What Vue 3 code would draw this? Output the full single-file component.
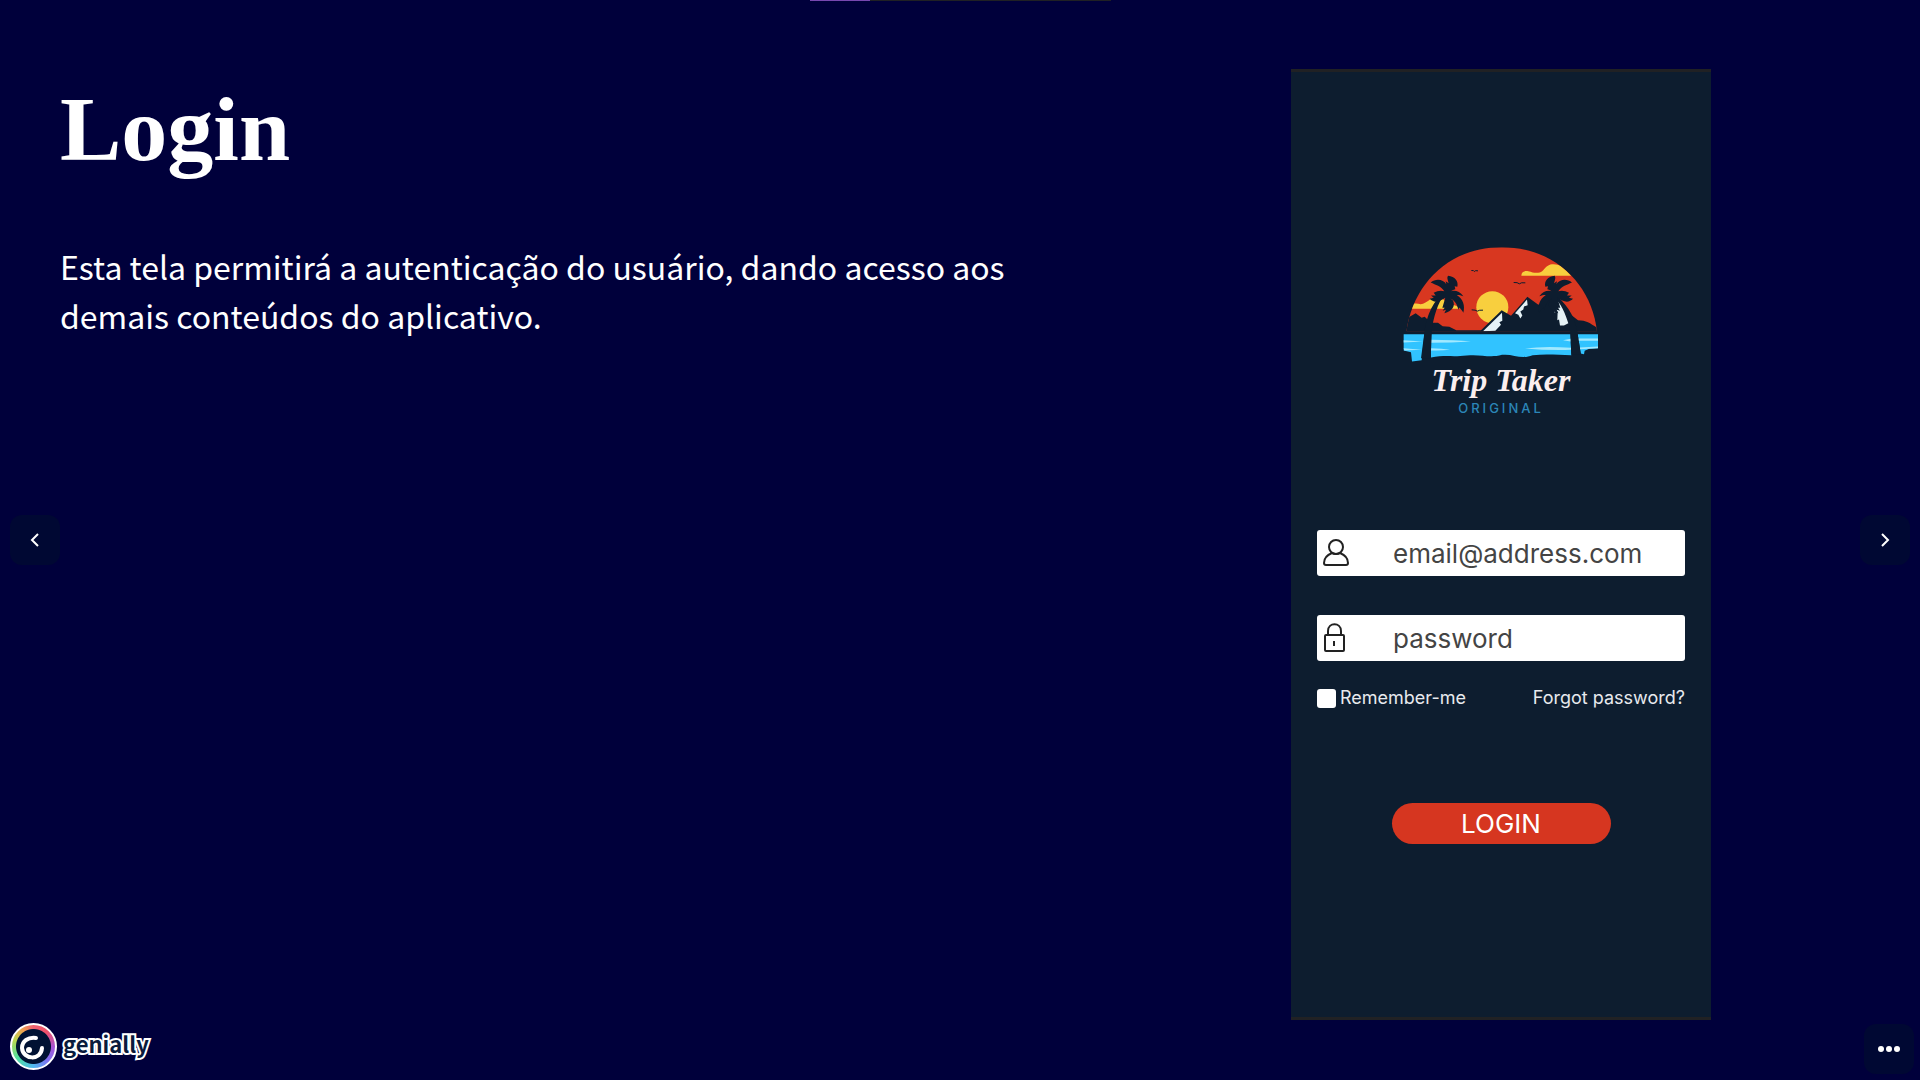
<script setup>
import { ref } from 'vue'

const email = ref('email@address.com')
const password = ref('password')
const remember = ref(false)
const progress = ref(20)
</script>

<template>
  <div class="viewer">
    <header class="top">
      <div class="progress"><div class="progress-fill" :style="{ width: progress + '%' }"></div></div>
    </header>

    <main class="stage">
      <button class="control" type="button" aria-label="Previous">
        <svg width="50" height="50" viewBox="0 0 50 50"><path d="m28 19-6 6 6 6" /></svg>
      </button>

      <section class="slide">
        <div class="copy">
          <h1>Login</h1>
          <p>Esta tela permitirá a autenticação do usuário, dando acesso aos demais conteúdos do aplicativo.</p>
        </div>

        <form class="phone" @submit.prevent>
          <div class="brand">
            <svg class="art" viewBox="60 48 600 350" aria-hidden="true">
              <defs>
                <clipPath id="sky"><path d="M76 304C96 160 205 51 362 51S632 160 648 304Z" /></clipPath>
                <g id="palm">
                  <path d="M199 188C214 178 234 180 247 198C237 195 232 194 228 195C246 206 253 226 247 248C243 240 239 236 235 232L232 239C229 222 219 209 208 205L216 211C223 227 216 242 190 249L195 239L185 242L191 233L184 233C188 222 190 211 193 203C175 216 158 219 146 206L158 203L150 196L164 196L158 188C169 181 181 180 190 183C180 168 164 164 149 157C164 144 187 147 196 162L194 153L203 159C200 149 197 142 201 137C222 139 233 153 229 170L221 168L223 177C217 179 209 183 199 188Z" />
                </g>
              </defs>
              <g clip-path="url(#sky)">
                <path fill="#d83720" d="M60 40h610v264H60z" />
                <path fill="#f8cf3e" d="M421 137C421 125 431 120 442 123C455 126 462 130 476 127C488 125 490 109 508 103C537 99 549 114 570 137Z" />
                <path fill="#f8cf3e" d="M82 236C86 220 101 218 119 222C140 219 145 203 164 201C190 202 194 218 211 224C224 225 232 229 235 236Z" />
                <circle cx="334" cy="231" r="48" fill="#f8cf3e" />
                <path d="M60 304V274L86 260 104 249 122 263 131 260 150 278 171 278 185 288 205 290 226 300H300L362 240 390 257 439 200 472 224 520 191 568 252 591 270C620 270 630 282 660 300V304Z" />
                <path fill="#e5f2f6" d="M306 303 363 248 364 272 355 276 360 284 343 302Z" />
                <path fill="#e5f2f6" d="M402 249 438 208 440 225 429 229 427 238 418 244 424 256 418 265 412 254Z" />
              </g>
              <path fill="#31c3ff" d="M68 312H130L122 390 93 394 90 366 68 361ZM149 312H568L571 375C534 375 500 371 455 375C420 389 396 370 363 374C324 385 300 371 257 376C216 381 190 374 150 382ZM590 312H651V354L625 356 611 362 609 372 599 370Z" />
              <g fill="#a2e9ff">
                <path d="M68 330 126 334 68 337ZM150 329Q220 329 270 334Q210 338 150 338ZM68 354 123 359 70 361ZM150 354Q184 354 207 359Q182 362 150 361ZM432 355Q490 347 570 353V359Q500 361 432 355ZM546 330Q580 325 569 325V334ZM592 325H651V332H592ZM597 352 651 349V354L597 357Z" />
              </g>
              <path d="M197 188C177 204 162 242 153 294L149 384H120L132 294C141 246 163 200 197 188ZM521 190C551 218 580 252 588 299L600 374H571L568 304C559 258 544 224 513 203Z" />
              <path fill="#e5f2f6" d="M513 203C532 209 546 230 562 279L549 286H537L534 268L529 270L530 244L520 247L523 230Z" />
              <use href="#palm" />
              <use href="#palm" transform="matrix(-1 0 0 1 722 0)" />
              <path fill="none" stroke="#0d1d2f" stroke-width="3" d="M271 121Q279 120 280 124Q282 120 291 122M398 157Q410 156 415 161Q420 156 433 158M272 239Q284 239 289 243Q294 239 306 240" />
            </svg>
            <strong>Trip Taker</strong>
            <small>ORIGINAL</small>
          </div>

          <label class="field">
            <svg viewBox="0 0 27 28" aria-hidden="true"><circle cx="13" cy="8" r="7" /><path d="M9 14C4 16 1 20 1 24Q1 26 3 26H23Q25 26 25 24C25 20 22 16 17 14Q13 16 9 14Z" /></svg>
            <input v-model="email" type="text" aria-label="Email" />
          </label>
          <label class="field">
            <svg viewBox="0 0 27 28" aria-hidden="true"><rect x="2" y="11" width="19" height="16" rx="1" /><path d="M5 11V7C5-2 18-2 18 7V11M11 17v5" /></svg>
            <input v-model="password" type="text" aria-label="Password" />
          </label>

          <div class="options">
            <label class="remember"><input v-model="remember" type="checkbox" />Remember-me</label>
            <a href="#">Forgot password?</a>
          </div>

          <button class="submit" type="submit">LOGIN</button>
        </form>
      </section>

      <button class="control" type="button" aria-label="Next">
        <svg width="50" height="50" viewBox="0 0 50 50"><path d="m22 19 6 6-6 6" /></svg>
      </button>
    </main>

    <footer class="bottom">
      <a class="genially" href="#">
        <span class="ring"><svg viewBox="2 2 43 43" aria-hidden="true"><path d="M26 15C18 14 12 18 12 25C13 37 31 38 32 25" /><circle cx="19" cy="27" r="3" /></svg></span>
        <span class="wordmark">genially</span>
      </a>
      <button class="control" type="button" aria-label="More options">
        <svg class="dots" width="50" height="50" viewBox="0 0 50 50"><circle cx="17" cy="25" r="3" /><circle cx="25" cy="25" r="3" /><circle cx="33" cy="25" r="3" /></svg>
      </button>
    </footer>
  </div>
</template>

<style>
body {
  margin: 0;
  background: #00003b;
}
</style>

<style scoped>
* {
  box-sizing: border-box;
}
.viewer {
  min-height: 100vh;
  display: grid;
  grid-template-rows: 60px 1fr 60px;
  background: #00003b;
  color: #fff;
  font-family: Inter, "Liberation Sans", sans-serif;
}
.progress {
  width: 301px;
  height: 1px;
  margin: 0 auto;
  background: #202124;
}
.progress-fill {
  height: 100%;
  background: #7848b0;
}
.stage {
  display: grid;
  grid-template-columns: 50px 1fr 50px;
  align-items: center;
  padding: 0 10px;
}
.control {
  width: 50px;
  height: 50px;
  padding: 0;
  border: 0;
  border-radius: 12px;
  background: #000833;
}
.control svg {
  display: block;
  fill: none;
  stroke: #fff;
  stroke-width: 2;
}
.control .dots {
  fill: #fff;
  stroke: none;
}
.slide {
  align-self: stretch;
  display: flex;
  justify-content: space-between;
  padding: 9px 149px 0 0;
}
.copy {
  flex: 0 1 940px;
}
h1 {
  margin: 10px 0 0;
  font: bold 92px/100px "Liberation Serif", serif;
}
p {
  margin: 63px 0 0;
  font: 32px/49px "Noto Sans CJK JP", "Noto Sans", sans-serif;
}
.copy {
  flex-basis: 960px;
}
.phone {
  flex: 0 0 420px;
  min-width: 0;
  display: flex;
  flex-direction: column;
  align-items: center;
  align-self: flex-start;
  min-height: 951px;
  padding: 174px 26px 40px;
  border: solid #202124;
  border-width: 3px 0;
  background: #0d1d2f;
}
.brand {
  display: flex;
  flex-direction: column;
  align-items: center;
  height: 284px;
}
.art {
  width: 200px;
  height: 117px;
  fill: #0d1d2f;
}
.brand strong {
  font: italic bold 32px/34px "Liberation Serif", serif;
  color: #fbefef;
}
.brand small {
  margin-top: 3px;
  font: 500 13px/16px Inter, sans-serif;
  letter-spacing: 3px;
  color: #2b86b8;
}
.field {
  display: flex;
  align-items: center;
  width: 100%;
  height: 46px;
  margin-bottom: 39px;
  padding-left: 6px;
  border-radius: 3px;
  background: #fff;
}
.field svg {
  width: 27px;
  height: 30px;
  flex: none;
  fill: none;
  stroke: #222;
  stroke-width: 2;
}
.field input {
  flex: 1;
  width: 0;
  min-width: 0;
  height: 46px;
  padding: 1px 0 0 43px;
  border: 0;
  background: none;
  font: 26px/44px Inter, sans-serif;
  color: #444;
}
.options {
  display: flex;
  justify-content: space-between;
  align-items: center;
  width: 100%;
  height: 24px;
  margin-top: -14px;
  font-size: 18px;
  line-height: 24px;
  color: #e8eaee;
}
.remember {
  display: flex;
  align-items: center;
  gap: 4px;
}
.remember input {
  appearance: none;
  width: 19px;
  height: 19px;
  margin: 0;
  border-radius: 3px;
  background: #fff;
}
.options a {
  color: inherit;
  text-decoration: none;
}
.submit {
  width: 219px;
  height: 41px;
  margin-top: 93px;
  padding: 0;
  border: 0;
  border-radius: 21px;
  background: #d63620;
  color: #fff;
  font: 26px/41px Inter, sans-serif;
}
.bottom {
  display: flex;
  justify-content: space-between;
  align-items: center;
  padding: 0 6px 0 10px;
}
.bottom .control {
  margin-bottom: 2px;
}
.genially {
  display: flex;
  align-items: center;
  gap: 6px;
  margin-bottom: 8px;
  text-decoration: none;
}
.ring {
  display: grid;
  width: 47px;
  height: 47px;
  border: 2px solid #fff;
  border-radius: 50%;
  background: radial-gradient(circle, #001233 17px, transparent 18px), conic-gradient(#f06070, #ef506a 12%, #a455d8 26%, #8070f0 37%, #50b8f0 50%, #50e0a0 65%, #b8d850 80%, #f0a050 91%, #f06070);
}
.ring svg {
  width: 43px;
  height: 43px;
  fill: none;
  stroke: #fff;
  stroke-width: 4;
  stroke-linecap: round;
}
.ring circle {
  fill: #fff;
  stroke: none;
}
.wordmark {
  padding-bottom: 6px;
  font: bold 22px/32px "Noto Sans CJK JP", sans-serif;
  color: #0a1a3c;
  -webkit-text-stroke: 4px #fff;
  paint-order: stroke fill;
}
</style>
